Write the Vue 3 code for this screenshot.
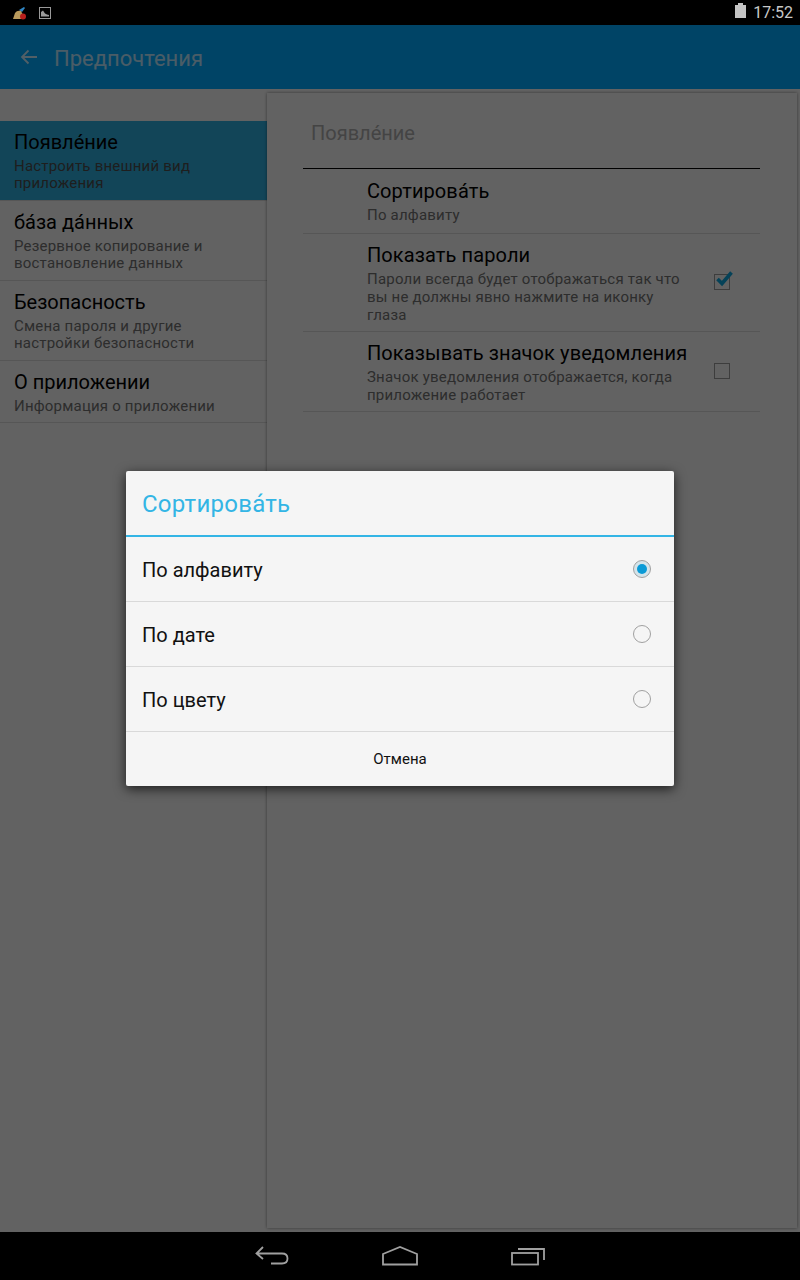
<template>
  <div class="screen">
    <div class="status-bar">
      <div class="status-left">
        <svg width="16" height="14" viewBox="0 0 16 14">
          <path d="M7 4 L12 1 L13 2 L10 6 Z" fill="#2f86c4" />
          <path d="M1 13 L3 7 Q5 4 9 5 L11 9 L11 13 Z" fill="#b99a5c" />
          <circle cx="11" cy="10.5" r="3" fill="#b8201c" />
        </svg>
        <svg width="12" height="12" viewBox="0 0 12 12">
          <rect x="0.5" y="0.5" width="11" height="11" fill="none" stroke="#999" />
          <path d="M2 9.5 V5 L4 3.5 L6 6.5 L8 7.5 L10 8 V9.5 Z" fill="#999" />
        </svg>
      </div>
      <div class="status-right">
        <span class="battery"></span>
        <span class="clock">17:52</span>
      </div>
    </div>

    <div class="app">
      <div class="action-bar">
        <svg class="back" width="18" height="16" viewBox="0 0 18 16" fill="none" stroke="#fff" stroke-width="1.8">
          <path d="M17 8 H2 M8.5 1.5 L2 8 L8.5 14.5" />
        </svg>
        <span class="app-title">Предпочтения</span>
      </div>

      <div class="body">
        <div class="sidebar">
          <div
            v-for="(item, index) in menu"
            :key="index"
            class="menu-item"
            :class="{ selected: index === 0 }"
          >
            <div class="menu-title">{{ item.title }}</div>
            <div class="menu-sub">{{ item.sub }}</div>
          </div>
        </div>

        <div class="pane">
          <div class="pane-title">Появле́ние</div>
          <div class="pane-rows">
            <div v-for="(row, index) in prefs" :key="index" class="pref">
              <div class="pref-text">
                <div class="pref-title">{{ row.title }}</div>
                <div class="pref-sub">{{ row.sub }}</div>
              </div>
              <div v-if="row.check !== undefined" class="check">
                <svg v-if="row.check" class="tick" width="20" height="18" viewBox="0 0 20 18" fill="none" stroke="#0ea5dc" stroke-width="3.6">
                  <path d="M3.5 9 L8 13.5 L17.5 2.5" />
                </svg>
              </div>
            </div>
          </div>
        </div>
      </div>

      <div class="scrim"></div>

      <div class="dialog">
        <div class="dialog-title">Сортирова́ть</div>
        <div v-for="(opt, index) in options" :key="index" class="option">
          <span>{{ opt }}</span>
          <span class="radio" :class="{ on: index === 0 }"></span>
        </div>
        <div class="cancel">Отмена</div>
      </div>
    </div>

    <div class="nav-bar">
      <svg width="34" height="20" viewBox="0 0 34 20" fill="none" stroke="#a0a0a0" stroke-width="1.8">
        <path d="M1.5 7.5 H27 Q32.5 7.5 32.5 12.5 Q32.5 17.5 27 17.5 H16 M8 1 L1.5 7.5 L8 13" />
      </svg>
      <svg width="36" height="20" viewBox="0 0 36 20" fill="none" stroke="#a0a0a0" stroke-width="1.8">
        <path d="M1 8 L18 1 L35 8 V18.5 H1 Z" />
      </svg>
      <svg width="34" height="20" viewBox="0 0 34 20" fill="none" stroke="#a0a0a0" stroke-width="1.8">
        <rect x="1" y="7" width="26" height="11.5" />
        <path d="M7 3 H33 V14" />
      </svg>
    </div>
  </div>
</template>

<script setup>
const menu = [
  { title: 'Появле́ние', sub: 'Настроить внешний вид приложения' },
  { title: 'ба́за да́нных', sub: 'Резервное копирование и востановление данных' },
  { title: 'Безопасность', sub: 'Смена пароля и другие настройки безопасности' },
  { title: 'О приложении', sub: 'Информация о приложении' }
]

const prefs = [
  { title: 'Сортирова́ть', sub: 'По алфавиту' },
  {
    title: 'Показать пароли',
    sub: 'Пароли всегда будет отображаться так что вы не должны явно нажмите на иконку глаза',
    check: true
  },
  {
    title: 'Показывать значок уведомления',
    sub: 'Значок уведомления отображается, когда приложение работает',
    check: false
  }
]

const options = ['По алфавиту', 'По дате', 'По цвету']
</script>

<style>
html,
body {
  margin: 0;
  background: #000;
}
</style>

<style scoped>
.screen {
  width: 800px;
  height: 1280px;
  display: flex;
  flex-direction: column;
  font-family: Roboto, 'Liberation Sans', sans-serif;
  overflow: hidden;
}

.status-bar {
  height: 25px;
  background: #000;
  display: flex;
  justify-content: space-between;
  align-items: center;
  padding: 0 7px 0 12px;
  box-sizing: border-box;
  flex-shrink: 0;
}

.status-left {
  display: flex;
  align-items: center;
  gap: 11px;
}

.status-right {
  display: flex;
  align-items: center;
  gap: 7px;
}

.battery {
  position: relative;
  width: 11px;
  height: 13px;
  background: #c4c4c4;
  margin-top: -2px;
}

.battery::before {
  content: '';
  position: absolute;
  left: 3px;
  top: -2px;
  width: 5px;
  height: 2px;
  background: #c4c4c4;
}

.clock {
  color: #c8c8c8;
  font-size: 16px;
}

.app {
  position: relative;
  flex: 1;
  display: flex;
  flex-direction: column;
  background: #f5f5f5;
  min-height: 0;
}

.action-bar {
  height: 64px;
  box-sizing: border-box;
  padding: 2px 0 0 20px;
  background: #00aaff;
  display: flex;
  align-items: center;
  gap: 16px;
  flex-shrink: 0;
}

.back {
  margin-top: -2px;
  opacity: 0.8;
}

.app-title {
  color: #fff;
  font-size: 22px;
  opacity: 0.72;
}

.body {
  flex: 1;
  display: flex;
  min-height: 0;
}

.sidebar {
  width: 267px;
  padding-top: 32px;
  box-sizing: border-box;
  flex-shrink: 0;
}

.menu-item {
  padding: 9px 14px 8px;
  border-bottom: 1px solid #d8d8d8;
}

.menu-item:last-child {
  padding-bottom: 7px;
}

.menu-item.selected {
  background: #2eacdc;
}

.menu-title {
  font-size: 20px;
  line-height: 24px;
  color: #000;
}

.menu-sub {
  font-size: 15px;
  letter-spacing: 0.2px;
  line-height: 17px;
  color: #707070;
  margin-top: 4px;
}

.menu-item.selected .menu-sub {
  color: #4c4c4c;
}

.pane {
  flex: 1;
  margin: 4px 3px 4px 0;
  background: #f5f5f5;
  box-shadow: 0 0 3px rgba(0, 0, 0, 0.45);
  padding: 0 37px 0 36px;
  min-width: 0;
}

.pane-title {
  height: 76px;
  line-height: 80px;
  box-sizing: border-box;
  padding-left: 8px;
  border-bottom: 1px solid #000;
  font-size: 20px;
  color: #aaa;
}

.pref {
  display: flex;
  align-items: center;
  min-height: 65px;
  box-sizing: border-box;
  padding: 8px 0 7px 64px;
  border-bottom: 1px solid #d8d8d8;
}

.pref:first-child {
  padding-bottom: 8px;
}

.pref-text {
  flex: 1;
  min-width: 0;
  padding-right: 8px;
}

.pref-title {
  font-size: 20px;
  letter-spacing: 0.1px;
  line-height: 26px;
  color: #000;
}

.pref-sub {
  font-size: 15px;
  letter-spacing: 0.2px;
  line-height: 18px;
  color: #707070;
  max-width: 322px;
  margin-top: 2px;
}

.check {
  position: relative;
  width: 14px;
  height: 14px;
  border: 1px solid #999;
  margin: -2px 30px 0 0;
  flex-shrink: 0;
}

.tick {
  position: absolute;
  left: -1px;
  top: -5px;
}

.scrim {
  position: absolute;
  inset: 0;
  background: rgba(0, 0, 0, 0.6);
}

.dialog {
  position: absolute;
  left: 126px;
  top: 446px;
  width: 548px;
  background: #f5f5f5;
  border-radius: 2px;
  box-shadow: 0 3px 12px rgba(0, 0, 0, 0.7);
}

.dialog-title {
  height: 66px;
  line-height: 66px;
  box-sizing: border-box;
  padding-left: 16px;
  border-bottom: 2px solid #33b5e5;
  font-size: 24px;
  letter-spacing: 0.25px;
  color: #33b5e5;
}

.option {
  height: 65px;
  box-sizing: border-box;
  display: flex;
  align-items: center;
  justify-content: space-between;
  padding: 2px 23px 0 16px;
  border-bottom: 1px solid #d9d9d9;
  font-size: 20px;
  color: #111;
}

.radio {
  position: relative;
  width: 16px;
  height: 16px;
  border: 1px solid #a0a0a0;
  border-radius: 50%;
  margin-top: -2px;
}

.radio.on {
  background: #d4e4ea;
}

.radio.on::after {
  content: '';
  position: absolute;
  left: 3px;
  top: 3px;
  width: 10px;
  height: 10px;
  border-radius: 50%;
  background: #0a9ad6;
}

.cancel {
  height: 54px;
  line-height: 54px;
  text-align: center;
  font-size: 15px;
  color: #111;
}

.nav-bar {
  height: 48px;
  background: #000;
  display: flex;
  align-items: center;
  justify-content: center;
  gap: 93px;
  flex-shrink: 0;
}
</style>
